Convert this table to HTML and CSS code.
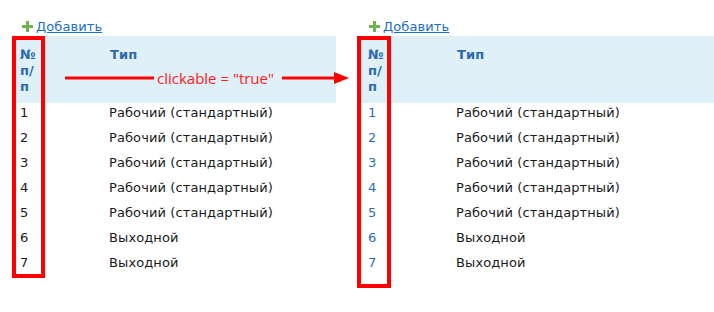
FILE: index.html
```html
<!DOCTYPE html>
<html lang="ru">
<head>
<meta charset="utf-8">
<title>clickable</title>
<link rel="stylesheet" href="styles.css">
</head>
<body>
<div class="page">
  <section class="panel panel-left">
    <div class="add">
      <svg class="plus" width="11" height="11" viewBox="0 0 11 11"><path d="M4 0h3v4h4v3H7v4H4V7H0V4h4z" fill="#6db34f"/></svg>
      <a class="add-link" href="#">Добавить</a>
    </div>
    <table class="grid">
      <thead>
        <tr><th class="c-num">№<br>п/<br>п</th><th class="c-type">Тип</th></tr>
      </thead>
      <tbody>
        <tr><td class="c-num">1</td><td class="c-type">Рабочий (стандартный)</td></tr>
        <tr><td class="c-num">2</td><td class="c-type">Рабочий (стандартный)</td></tr>
        <tr><td class="c-num">3</td><td class="c-type">Рабочий (стандартный)</td></tr>
        <tr><td class="c-num">4</td><td class="c-type">Рабочий (стандартный)</td></tr>
        <tr><td class="c-num">5</td><td class="c-type">Рабочий (стандартный)</td></tr>
        <tr><td class="c-num">6</td><td class="c-type">Выходной</td></tr>
        <tr><td class="c-num">7</td><td class="c-type">Выходной</td></tr>
      </tbody>
    </table>
    <div class="mark mark-left"></div>
  </section>
  <section class="panel panel-right">
    <div class="add">
      <svg class="plus" width="11" height="11" viewBox="0 0 11 11"><path d="M4 0h3v4h4v3H7v4H4V7H0V4h4z" fill="#6db34f"/></svg>
      <a class="add-link" href="#">Добавить</a>
    </div>
    <table class="grid">
      <thead>
        <tr><th class="c-num">№<br>п/<br>п</th><th class="c-type">Тип</th></tr>
      </thead>
      <tbody>
        <tr><td class="c-num"><a class="num-link" href="#">1</a></td><td class="c-type">Рабочий (стандартный)</td></tr>
        <tr><td class="c-num"><a class="num-link" href="#">2</a></td><td class="c-type">Рабочий (стандартный)</td></tr>
        <tr><td class="c-num"><a class="num-link" href="#">3</a></td><td class="c-type">Рабочий (стандартный)</td></tr>
        <tr><td class="c-num"><a class="num-link" href="#">4</a></td><td class="c-type">Рабочий (стандартный)</td></tr>
        <tr><td class="c-num"><a class="num-link" href="#">5</a></td><td class="c-type">Рабочий (стандартный)</td></tr>
        <tr><td class="c-num"><a class="num-link" href="#">6</a></td><td class="c-type">Выходной</td></tr>
        <tr><td class="c-num"><a class="num-link" href="#">7</a></td><td class="c-type">Выходной</td></tr>
      </tbody>
    </table>
    <div class="mark mark-right"></div>
  </section>
  <div class="note">
    <svg class="note-line" width="90" height="6" viewBox="0 0 90 6"><rect x="0" y="1.5" width="89" height="3" fill="#ff0000"/></svg>
    <span class="note-text">clickable = "true"</span>
    <svg class="note-arrow" width="68" height="12" viewBox="0 0 68 12"><rect x="0" y="4.5" width="54" height="3" fill="#ff0000"/><path d="M52 0L67 6L52 12z" fill="#ff0000"/></svg>
  </div>
</div>
</body>
</html>
```

FILE: styles.css
```css
* { box-sizing: border-box; }
html, body { margin: 0; padding: 0; background: #ffffff; }
body {
  font-family: "DejaVu Sans", Verdana, sans-serif;
  font-size: 13px;
  letter-spacing: 0.1px;
  color: #1a1a1a;
}
.page {
  position: relative;
  display: flex;
  gap: 21px;
  padding: 17px 0 0 12px;
  width: 714px;
  height: 312px;
  overflow: hidden;
}
.panel { position: relative; }
.panel-left { width: 324px; flex: none; }
.panel-right { flex: 1; }
.add {
  display: flex;
  align-items: center;
  gap: 3px;
  height: 19px;
  padding-left: 10px;
}
.panel-right .add { padding-left: 12px; }
.plus { display: block; flex: none; }
.add-link {
  color: #1a6fc4;
  text-decoration: underline;
  line-height: 16px;
}
.grid {
  border-collapse: collapse;
  width: 100%;
}
.grid th {
  background: #e0f0f8;
  color: #2b6aae;
  font-weight: bold;
  text-align: left;
  vertical-align: top;
  line-height: 16px;
  height: 67px;
  padding: 11px 0 0 0;
}
.grid td {
  line-height: 16px;
  height: 25px;
  padding: 2px 0 7px 0;
  vertical-align: top;
}
.c-num { width: 97px; padding-left: 8px !important; }
.panel-right .c-num { width: 99px; padding-left: 11px !important; }
.grid th.c-type { padding-left: 1px; }
.num-link { color: #2a6ebd; text-decoration: none; }
.mark {
  position: absolute;
  top: 19px;
  border: 4px solid #ff0000;
  pointer-events: none;
}
.mark-left { left: 0; width: 33px; height: 242px; }
.mark-right { left: 0; width: 34px; height: 252px; }
.note {
  position: absolute;
  left: 65px;
  top: 68px;
  display: flex;
  align-items: center;
  height: 20px;
}
.note-line { display: block; margin-right: 2px; }
.note-text {
  font-family: "Open Sans", "Noto Sans", sans-serif;
  font-size: 15px;
  letter-spacing: 0;
  color: #ff2020;
  white-space: nowrap;
  margin-right: 8px;
}
.note-arrow { display: block; }
```
